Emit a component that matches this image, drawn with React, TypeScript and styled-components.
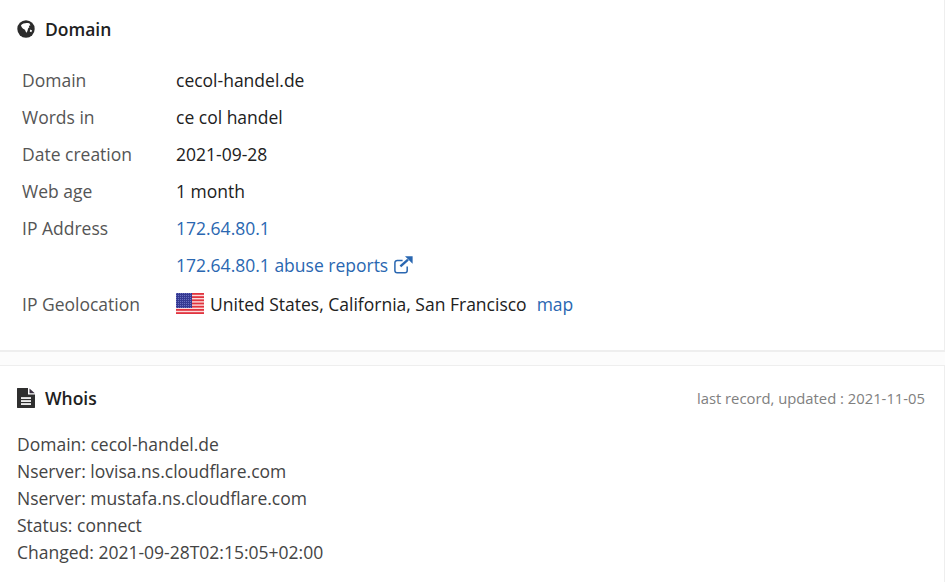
import React from 'react';
import styled, {createGlobalStyle} from "styled-components";

const GlobalStyle = createGlobalStyle`
  html, body {
    margin: 0;
    padding: 0;
    background: #fcfcfc;
    font-family: "Open Sans", "Liberation Sans", sans-serif;
    overflow: hidden;
  }
`

const domainRows = [
    {label: "Domain", value: "cecol-handel.de"},
    {label: "Words in", value: "ce col handel"},
    {label: "Date creation", value: "2021-09-28"},
    {label: "Web age", value: "1 month"},
]

const whoisLines = [
    "Domain: cecol-handel.de",
    "Nserver: lovisa.ns.cloudflare.com",
    "Nserver: mustafa.ns.cloudflare.com",
    "Status: connect",
    "Changed: 2021-09-28T02:15:05+02:00",
]

const GlobeIcon: React.FC = () => (
    <svg width="18" height="18" viewBox="0 0 18 18">
        <circle cx="9" cy="9" r="8.7" fill="#2b2b2b"/>
        <path d="M4 5.2C6 3.2 9.6 2.6 12.6 3.6L13.4 5.4L11.8 5.8L12.4 7.4C11 7.4 11 9 10.6 10.4C10.4 11.4 9.8 12 9.4 12.8C8.6 11.8 8.6 10 7.2 9.2C5.6 8.6 4.4 7.2 4 5.2Z" fill="#fff"/>
        <path d="M13.2 9.6L15.2 10.4L14.2 12.2L12.8 11.4Z" fill="#fff"/>
    </svg>
)

const FileIcon: React.FC = () => (
    <svg width="18" height="20" viewBox="0 0 18 20">
        <path d="M0 0.5C0 0.2 0.2 0 0.5 0H11V6.5H18V19.5C18 19.8 17.8 20 17.5 20H0.5C0.2 20 0 19.8 0 19.5Z" fill="#2f2f2f"/>
        <path d="M12.5 0.4L17.8 5.2H12.5Z" fill="#3a3040"/>
        <rect x="4" y="9.2" width="10" height="1.7" fill="#fff"/>
        <rect x="4" y="12.2" width="10" height="1.7" fill="#fff"/>
        <rect x="4" y="15.2" width="10" height="1.7" fill="#fff"/>
    </svg>
)

const ExternalIcon: React.FC = () => (
    <svg width="19" height="18" viewBox="0 0 19 18">
        <path d="M13.2 10.5V14.5C13.2 15.8 12.3 16.8 11 16.8H3.2C1.9 16.8 0.9 15.8 0.9 14.5V6.7C0.9 5.4 1.9 4.4 3.2 4.4H8.6" fill="none" stroke="#2a67b1" strokeWidth="1.5"/>
        <path d="M6.4 10.4L14 3.6" fill="none" stroke="#2a67b1" strokeWidth="2.4"/>
        <path d="M11 0.3H18.6V7.8Z" fill="#2a67b1"/>
    </svg>
)

const UsFlag: React.FC = () => (
    <svg width="28" height="21" viewBox="0 0 28 21">
        <defs>
            <pattern id="stars" width="2" height="2" patternUnits="userSpaceOnUse">
                <rect width="2" height="2" fill="#353a92"/>
                <rect width="1" height="1" fill="#6a6fc0"/>
            </pattern>
        </defs>
        <rect width="28" height="21" fill="#fbdcdc"/>
        {[0, 3.2, 6.4, 9.6, 12.8, 16, 19.2].map(y =>
            <rect key={y} y={y} width="28" height="1.8" fill="#e0343f"/>
        )}
        <rect width="16" height="15" fill="url(#stars)"/>
    </svg>
)

export default function App() {
    return (
        <Page>
            <GlobalStyle/>
            <DomainCard>
                <Header>
                    <HeaderIcon><GlobeIcon/></HeaderIcon>
                    <Title>Domain</Title>
                </Header>
                <Table>
                    {domainRows.map(row =>
                        <Row key={row.label}>
                            <Label>{row.label}</Label>
                            <Value>{row.value}</Value>
                        </Row>
                    )}
                    <Row>
                        <Label>IP Address</Label>
                        <Link>172.64.80.1</Link>
                    </Row>
                    <Row>
                        <Label/>
                        <Link>172.64.80.1 abuse reports <ExternalIcon/></Link>
                    </Row>
                    <GeoRow>
                        <Label>IP Geolocation</Label>
                        <Geo>
                            <UsFlag/>
                            <Value>United States, California, San Francisco</Value>
                            <Link>map</Link>
                        </Geo>
                    </GeoRow>
                </Table>
            </DomainCard>
            <WhoisCard>
                <WhoisHeader>
                    <HeaderLeft>
                        <HeaderIcon><FileIcon/></HeaderIcon>
                        <Title>Whois</Title>
                    </HeaderLeft>
                    <Updated>last record, updated : 2021-11-05</Updated>
                </WhoisHeader>
                <WhoisBody>
                    {whoisLines.map(line => <WhoisLine key={line}>{line}</WhoisLine>)}
                </WhoisBody>
            </WhoisCard>
        </Page>
    );
}

const Page = styled.div`
  width: 945px;
  height: 582px;
  display: flex;
  flex-direction: column;
  gap: 13px;
  overflow: hidden;
`
const DomainCard = styled.section`
  height: 352px;
  box-sizing: border-box;
  background: #fff;
  border-right: 1px solid #eeeeee;
  border-bottom: 2px solid #eeeeee;
  padding: 14px 0 0 17px;
`
const WhoisCard = styled.section`
  flex: 1;
  background: #fff;
  border-top: 1px solid #eeeeee;
  border-right: 1px solid #eeeeee;
  padding: 17px 19px 0 17px;
`
const Header = styled.header`
  display: flex;
  align-items: center;
  height: 30px;
`
const HeaderLeft = styled.div`
  display: flex;
  align-items: center;
`
const WhoisHeader = styled(Header)`
  justify-content: space-between;
`
const HeaderIcon = styled.span`
  display: flex;
  width: 28px;
`
const Title = styled.h2`
  margin: 0;
  font-size: 17.5px;
  font-weight: 600;
  color: #212121;
`
const Table = styled.div`
  display: flex;
  flex-direction: column;
  margin-top: 17px;
  padding-left: 5px;
`
const Row = styled.div`
  display: flex;
  align-items: center;
  height: 37px;
  font-size: 17.5px;
`
const GeoRow = styled(Row)`
  height: 41px;
`
const Label = styled.span`
  width: 154px;
  color: #555555;
`
const Value = styled.span`
  color: #212121;
`
const Link = styled.a`
  color: #2a67b1;
  display: inline-flex;
  align-items: center;
  gap: 6px;
`
const Geo = styled.div`
  display: flex;
  align-items: center;
  gap: 6px;

  ${Link} {
    margin-left: 4px;
  }
`
const Updated = styled.span`
  font-size: 14.8px;
  color: #808080;
`
const WhoisBody = styled.div`
  margin-top: 18px;
`
const WhoisLine = styled.div`
  font-size: 17.5px;
  line-height: 27px;
  color: #444444;
`
